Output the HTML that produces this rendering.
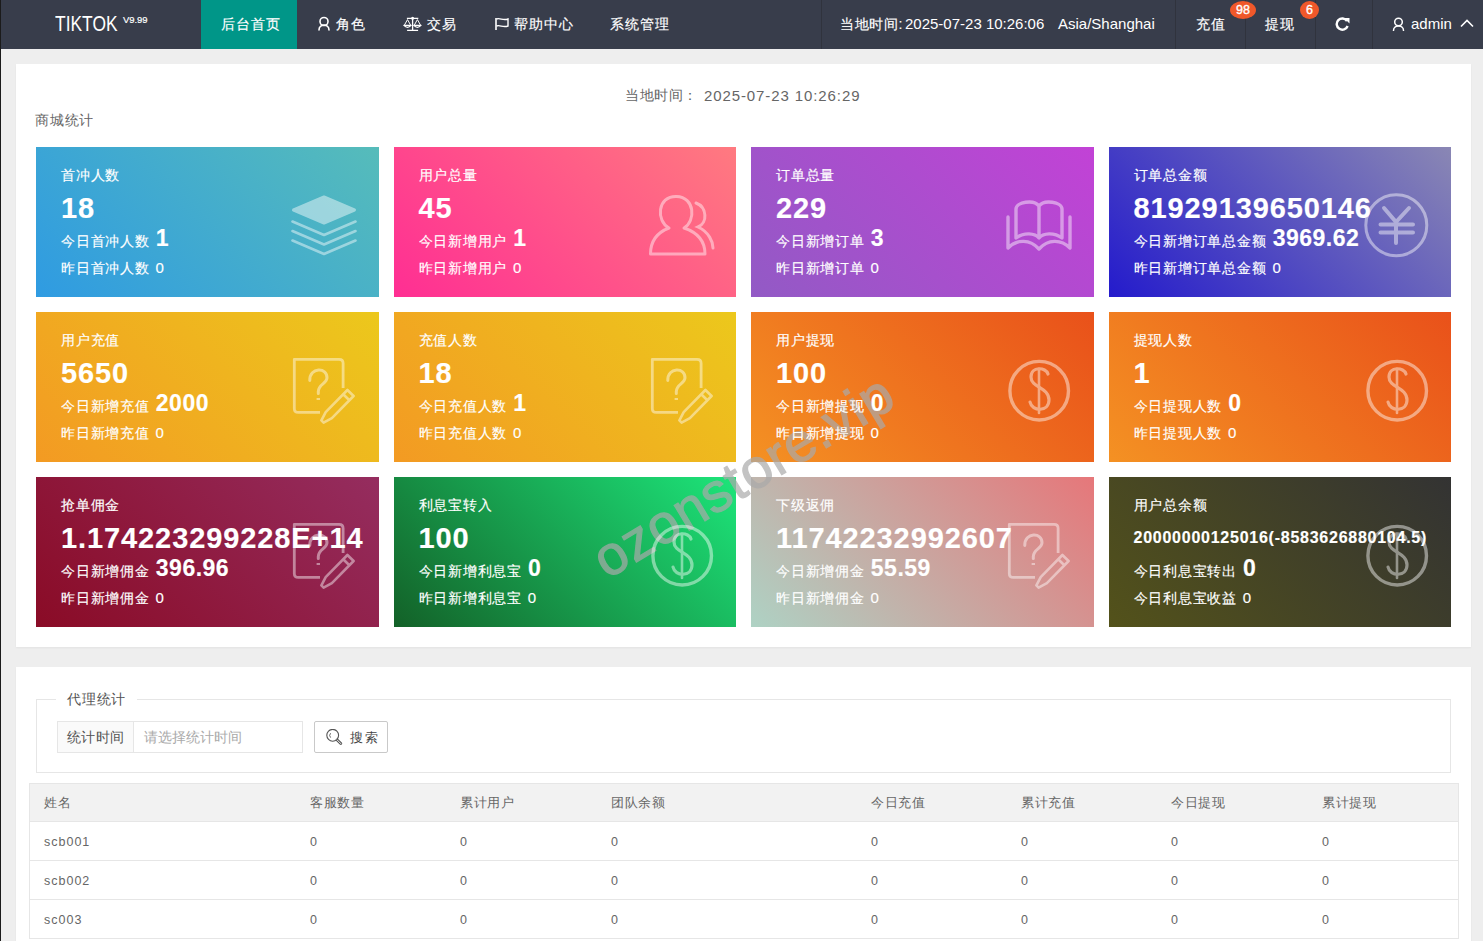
<!DOCTYPE html>
<html><head><meta charset="utf-8">
<style>
*{margin:0;padding:0;box-sizing:border-box}
html,body{width:1483px;height:941px;overflow:hidden;background:#eeeeee;font-family:"Liberation Sans",sans-serif;position:relative}
.abs{position:absolute}
#hdr{position:absolute;left:0;top:0;width:1483px;height:49px;background:#383d4b;color:#fff}
#hdr .t{position:absolute;top:0;height:49px;line-height:49px;font-size:14px;color:#fff;white-space:nowrap;-webkit-text-stroke:.15px #fff}
#hdr svg{position:absolute}
.sep{position:absolute;top:0;width:1px;height:49px;background:#30333d}
.badge{position:absolute;line-height:18px;border-radius:50%;background:#f0582a;color:#fff;font-size:12.5px;text-align:center;-webkit-text-stroke:.35px #fff}
#leftbar{position:absolute;left:0;top:0;width:1px;height:941px;background:#1b1b1b}
.card{position:absolute;left:16px;width:1455px;background:#fff;box-shadow:0 1px 2px rgba(0,0,0,.05)}
.sc{position:absolute;width:342.5px;height:150px;color:#fff;overflow:hidden;-webkit-text-stroke:.15px #fff}
.sc svg{position:absolute}
.sc .ti{position:absolute;left:25px;top:19px;font-size:14px;line-height:18px;white-space:nowrap;letter-spacing:.8px}
.sc .big{position:absolute;left:25px;top:45px;font-size:29px;font-weight:bold;line-height:32px;white-space:nowrap;letter-spacing:.9px}
.sc .l1{position:absolute;left:25px;top:80px;font-size:14px;line-height:22px;white-space:nowrap;letter-spacing:.8px}
.sc .l1 b{font-size:23px;margin-left:6px;letter-spacing:.5px}
.sc .l2{position:absolute;left:25px;top:110px;font-size:14px;line-height:22px;white-space:nowrap;letter-spacing:.8px}
.sc .l2 i{font-style:normal;font-size:15px;margin-left:1px}
.tbl{position:absolute;left:29px;top:783px;width:1430px;border:1px solid #e6e6e6;border-bottom:0}
.tr{position:relative;height:39px;border-bottom:1px solid #e6e6e6;font-size:12.5px;color:#666;letter-spacing:1px}
.tr.h span{letter-spacing:.5px;font-size:13px;top:0}
.tr.h{background:#f2f2f2;height:38px}
.tr span{position:absolute;top:1px;line-height:38px;white-space:nowrap;margin-left:1px}
</style></head><body>
<div id="hdr">
  <div class="t" style="left:55px;top:0px;font-size:21.5px;transform-origin:0 0;transform:scaleX(.81);-webkit-text-stroke:0">TIKTOK</div>
  <div class="t" style="left:123px;top:-5px;font-size:9.5px;letter-spacing:-.1px;-webkit-text-stroke:.2px #fff">V9.99</div>
  <div class="abs" style="left:201px;top:0;width:96px;height:49px;background:#009688"></div>
  <div class="t" style="left:221px;letter-spacing:1px">后台首页</div>
  <svg style="left:317px;top:16px" width="14" height="15"><circle cx="7" cy="5.5" r="4" fill="none" stroke="#fff" stroke-width="1.6"/><path d="M2 14 C2 7.5 12 7.5 12 14" fill="none" stroke="#fff" stroke-width="1.6" stroke-linecap="round"/></svg>
  <div class="t" style="left:336px;letter-spacing:1px">角色</div>
  <svg style="left:403px;top:16px" width="20" height="16"><path d="M3.9 2.3 L15.3 2.3 M9.6 2.3 L9.6 14.3 M4.1 14.4 L15.1 14.4" stroke="#fff" stroke-width="1.3" fill="none"/><circle cx="9.6" cy="2.3" r="1.5" fill="#fff"/><path d="M1.3 9.3 L4.5 3.6 L7.7 9.3 M11.2 9.3 L14.4 3.6 L17.6 9.3" stroke="#fff" stroke-width="1" fill="none" stroke-linejoin="round"/><path d="M0.9 9.4 Q4.5 13.3 8.1 9.4 Z M10.8 9.4 Q14.4 13.3 18 9.4 Z" stroke="#fff" stroke-width="1.3" fill="none" stroke-linejoin="round"/></svg>
  <div class="t" style="left:427px;letter-spacing:1px">交易</div>
  <svg style="left:495px;top:17px" width="15" height="14"><path d="M1 1 L1 13" stroke="#fff" stroke-width="1.6"/><path d="M1.5 2 C5 0.5 8 4 13 2 L13 9 C8 11 5 7.5 1.5 9" stroke="#fff" stroke-width="1.4" fill="none"/></svg>
  <div class="t" style="left:514px;letter-spacing:1px">帮助中心</div>
  <div class="t" style="left:610px;letter-spacing:1px">系统管理</div>
  <div class="sep" style="left:821px"></div>
  <div class="t" style="left:840px;letter-spacing:.6px">当地时间:</div>
  <div class="t" style="left:905px;top:-1px;font-size:15px;-webkit-text-stroke:0">2025-07-23 10:26:06</div>
  <div class="t" style="left:1058px;top:-1px;font-size:15px;-webkit-text-stroke:0">Asia/Shanghai</div>
  <div class="sep" style="left:1175px"></div>
  <div class="t" style="left:1195.5px;letter-spacing:1px">充值</div>
  <div class="sep" style="left:1245px"></div>
  <div class="badge" style="left:1230px;top:1px;width:26px;height:18px">98</div>
  <div class="t" style="left:1265px;letter-spacing:1px">提现</div>
  <div class="sep" style="left:1315px"></div>
  <div class="badge" style="left:1300px;top:1px;width:19px;height:18px">6</div>
  <svg style="left:1335px;top:17px" width="16" height="14"><path d="M12 4 A5.6 5.6 0 1 0 12.6 9" stroke="#fff" stroke-width="2.4" fill="none"/><path d="M9 1 L14.5 1 L14.5 6.5 Z" fill="#fff"/></svg>
  <div class="sep" style="left:1372px"></div>
  <svg style="left:1392px;top:17px" width="13" height="14"><circle cx="6.5" cy="5" r="3.8" fill="none" stroke="#fff" stroke-width="1.5"/><path d="M1.5 13.5 C1.5 7.5 11.5 7.5 11.5 13.5" fill="none" stroke="#fff" stroke-width="1.5" stroke-linecap="round"/></svg>
  <div class="t" style="left:1411px;top:-1px;font-size:15px;-webkit-text-stroke:0">admin</div>
  <svg style="left:1460px;top:19px" width="14" height="9"><path d="M1 7.5 L7 1.5 L13 7.5" stroke="#fff" stroke-width="1.6" fill="none"/></svg>
</div>
<div id="leftbar"></div>

<div class="card" style="top:64px;height:583px">
  <div class="abs" style="left:609px;top:23px;font-size:14px;color:#666;white-space:nowrap;letter-spacing:.6px">当地时间：</div>
  <div class="abs" style="left:688px;top:23px;font-size:15px;line-height:17px;color:#666;white-space:nowrap;letter-spacing:.9px">2025-07-23 10:26:29</div>
  <div class="abs" style="left:19px;top:48px;font-size:14px;color:#666;letter-spacing:.8px">商城统计</div>
</div>
<div class="sc" style="left:36px;top:147px;background:linear-gradient(45deg,#2f9be2,#56bcba)"></div>
<div class="sc" style="left:393.5px;top:147px;background:linear-gradient(45deg,#ff2e93,#ff7a80)"></div>
<div class="sc" style="left:751px;top:147px;background:linear-gradient(45deg,#925ac5,#c242d6)"></div>
<div class="sc" style="left:1108.5px;top:147px;background:linear-gradient(45deg,#241bcc,#8a87b4)"></div>
<div class="sc" style="left:36px;top:312px;background:linear-gradient(45deg,#f39a23,#ecc81c)"></div>
<div class="sc" style="left:393.5px;top:312px;background:linear-gradient(45deg,#f39a23,#ecc81c)"></div>
<div class="sc" style="left:751px;top:312px;background:linear-gradient(45deg,#f49123,#e9511a)"></div>
<div class="sc" style="left:1108.5px;top:312px;background:linear-gradient(45deg,#f49123,#e9511a)"></div>
<div class="sc" style="left:36px;top:477px;background:linear-gradient(45deg,#8a0b26,#952d5f)"></div>
<div class="sc" style="left:393.5px;top:477px;background:linear-gradient(45deg,#136128,#1de57a)"></div>
<div class="sc" style="left:751px;top:477px;background:linear-gradient(45deg,#aed2c4,#e6777a)"></div>
<div class="sc" style="left:1108.5px;top:477px;background:linear-gradient(45deg,#53521a,#333333)"></div>
<div class="abs" style="left:613px;top:529px;height:60px;line-height:60px;font-size:55px;color:#aaa;-webkit-text-stroke:1.2px #aaa;opacity:.7;transform-origin:0 100%;transform:rotate(-31deg);white-space:nowrap;letter-spacing:1px">ozonstore.vip</div>
<div class="sc" style="left:36px;top:147px">
 <svg width="343" height="150" style="left:0;top:0"><g opacity="0.45"><path d="M257.5 63 L288 50 L318.5 63 L288 76 Z" fill="#fff" stroke="#fff" stroke-width="3" stroke-linejoin="round"/>
  <path d="M256.5 74.5 L288 88 L319.5 74.5" fill="none" stroke="#fff" stroke-width="2.6" stroke-linecap="round" stroke-linejoin="round"/>
  <path d="M256.5 84 L288 97.5 L319.5 84" fill="none" stroke="#fff" stroke-width="2.6" stroke-linecap="round" stroke-linejoin="round"/>
  <path d="M256.5 93.5 L288 107 L319.5 93.5" fill="none" stroke="#fff" stroke-width="2.6" stroke-linecap="round" stroke-linejoin="round"/></g></svg>
 <div class="ti">首冲人数</div>
 <div class="big">18</div>
 <div class="l1">今日首冲人数<b>1</b></div>
 <div class="l2">昨日首冲人数 <i>0</i></div>
</div>
<div class="sc" style="left:393.5px;top:147px">
 <svg width="343" height="150" style="left:0;top:0"><g opacity="0.45"><path d="M275 81 C262 74 263 49 282.5 49.5 C301 50 302 74 290 81 C305 86 311 96 311 107 L256.5 107 C256.5 96 262 86 275 81 Z" fill="none" stroke="#fff" stroke-width="3" stroke-linejoin="round"/>
  <path d="M302 56 C313 60 314 76 304 80 C315 85 319 95 319 101" fill="none" stroke="#fff" stroke-width="3" stroke-linecap="round"/></g></svg>
 <div class="ti">用户总量</div>
 <div class="big">45</div>
 <div class="l1">今日新增用户<b>1</b></div>
 <div class="l2">昨日新增用户 <i>0</i></div>
</div>
<div class="sc" style="left:751px;top:147px">
 <svg width="343" height="150" style="left:0;top:0"><g opacity="0.45"><path d="M257 70 L257 101 C266 92 279 92 288 102 C297 92 310 92 319 101 L319 70" fill="none" stroke="#fff" stroke-width="3.4" stroke-linecap="round" stroke-linejoin="round"/>
  <path d="M265 91 L265 62 C265 55 283 52 288 59 C293 52 311 55 311 62 L311 91 C303 85 292 86 288 91 C284 86 273 85 265 91 Z M288 59 L288 90" fill="none" stroke="#fff" stroke-width="3.4" stroke-linecap="round" stroke-linejoin="round"/></g></svg>
 <div class="ti">订单总量</div>
 <div class="big">229</div>
 <div class="l1">今日新增订单<b>3</b></div>
 <div class="l2">昨日新增订单 <i>0</i></div>
</div>
<div class="sc" style="left:1108.5px;top:147px">
 <svg width="343" height="150" style="left:0;top:0"><g opacity="0.45"><circle cx="287.3" cy="78.2" r="30.5" fill="none" stroke="#fff" stroke-width="3"/>
  <path d="M275 61 L287 75 L300 61 M287 75 L287 96 M271.5 77.5 L304 77.5 M271.5 85.5 L304 85.5" fill="none" stroke="#fff" stroke-width="4" stroke-linecap="round"/></g></svg>
 <div class="ti">订单总金额</div>
 <div class="big">81929139650146</div>
 <div class="l1">今日新增订单总金额<b>3969.62</b></div>
 <div class="l2">昨日新增订单总金额 <i>0</i></div>
</div>
<div class="sc" style="left:36px;top:312px">
 <svg width="343" height="150" style="left:0;top:0"><g opacity="0.45"><path d="M284 100.4 L262.3 100.4 Q258.3 100.4 258.3 96.4 L258.3 47.3 L303.1 47.3 Q307.1 47.3 307.1 51.3 L307.1 76" fill="none" stroke="#fff" stroke-width="2.8" stroke-linejoin="round"/>
  <path d="M273.8 68.4 C273.5 55 291.5 55 291 66 C290.5 72 282.5 72 282.3 79.5 L282.3 81.5" fill="none" stroke="#fff" stroke-width="3" stroke-linecap="round"/>
  <path d="M282.3 86 L282.3 88" fill="none" stroke="#fff" stroke-width="3.4" stroke-linecap="butt"/>
  <path d="M287.6 110.6 L295.9 106.1 L317.6 84.0 L311.4 78.0 L289.7 100.1 L285.4 108.4 Z M313.4 88.3 L307.2 82.3" fill="none" stroke="#fff" stroke-width="2.6" stroke-linejoin="round"/></g></svg>
 <div class="ti">用户充值</div>
 <div class="big">5650</div>
 <div class="l1">今日新增充值<b>2000</b></div>
 <div class="l2">昨日新增充值 <i>0</i></div>
</div>
<div class="sc" style="left:393.5px;top:312px">
 <svg width="343" height="150" style="left:0;top:0"><g opacity="0.45"><path d="M284 100.4 L262.3 100.4 Q258.3 100.4 258.3 96.4 L258.3 47.3 L303.1 47.3 Q307.1 47.3 307.1 51.3 L307.1 76" fill="none" stroke="#fff" stroke-width="2.8" stroke-linejoin="round"/>
  <path d="M273.8 68.4 C273.5 55 291.5 55 291 66 C290.5 72 282.5 72 282.3 79.5 L282.3 81.5" fill="none" stroke="#fff" stroke-width="3" stroke-linecap="round"/>
  <path d="M282.3 86 L282.3 88" fill="none" stroke="#fff" stroke-width="3.4" stroke-linecap="butt"/>
  <path d="M287.6 110.6 L295.9 106.1 L317.6 84.0 L311.4 78.0 L289.7 100.1 L285.4 108.4 Z M313.4 88.3 L307.2 82.3" fill="none" stroke="#fff" stroke-width="2.6" stroke-linejoin="round"/></g></svg>
 <div class="ti">充值人数</div>
 <div class="big">18</div>
 <div class="l1">今日充值人数<b>1</b></div>
 <div class="l2">昨日充值人数 <i>0</i></div>
</div>
<div class="sc" style="left:751px;top:312px">
 <svg width="343" height="150" style="left:0;top:0"><g opacity="0.45"><circle cx="288.2" cy="78.7" r="29.3" fill="none" stroke="#fff" stroke-width="3.4"/>
  <path d="M297 62 C295 55 280 54 280 65 C280 76 298 75 298 88 C298 100 281 100 279 90" fill="none" stroke="#fff" stroke-width="3.2" stroke-linecap="round"/>
  <path d="M288 57 L288 101" fill="none" stroke="#fff" stroke-width="2.6" stroke-linecap="round"/></g></svg>
 <div class="ti">用户提现</div>
 <div class="big">100</div>
 <div class="l1">今日新增提现<b>0</b></div>
 <div class="l2">昨日新增提现 <i>0</i></div>
</div>
<div class="sc" style="left:1108.5px;top:312px">
 <svg width="343" height="150" style="left:0;top:0"><g opacity="0.45"><circle cx="288.2" cy="78.7" r="29.3" fill="none" stroke="#fff" stroke-width="3.4"/>
  <path d="M297 62 C295 55 280 54 280 65 C280 76 298 75 298 88 C298 100 281 100 279 90" fill="none" stroke="#fff" stroke-width="3.2" stroke-linecap="round"/>
  <path d="M288 57 L288 101" fill="none" stroke="#fff" stroke-width="2.6" stroke-linecap="round"/></g></svg>
 <div class="ti">提现人数</div>
 <div class="big">1</div>
 <div class="l1">今日提现人数<b>0</b></div>
 <div class="l2">昨日提现人数 <i>0</i></div>
</div>
<div class="sc" style="left:36px;top:477px">
 <svg width="343" height="150" style="left:0;top:0"><g opacity="0.45"><path d="M284 100.4 L262.3 100.4 Q258.3 100.4 258.3 96.4 L258.3 47.3 L303.1 47.3 Q307.1 47.3 307.1 51.3 L307.1 76" fill="none" stroke="#fff" stroke-width="2.8" stroke-linejoin="round"/>
  <path d="M273.8 68.4 C273.5 55 291.5 55 291 66 C290.5 72 282.5 72 282.3 79.5 L282.3 81.5" fill="none" stroke="#fff" stroke-width="3" stroke-linecap="round"/>
  <path d="M282.3 86 L282.3 88" fill="none" stroke="#fff" stroke-width="3.4" stroke-linecap="butt"/>
  <path d="M287.6 110.6 L295.9 106.1 L317.6 84.0 L311.4 78.0 L289.7 100.1 L285.4 108.4 Z M313.4 88.3 L307.2 82.3" fill="none" stroke="#fff" stroke-width="2.6" stroke-linejoin="round"/></g></svg>
 <div class="ti">抢单佣金</div>
 <div class="big">1.174223299228E+14</div>
 <div class="l1">今日新增佣金<b>396.96</b></div>
 <div class="l2">昨日新增佣金 <i>0</i></div>
</div>
<div class="sc" style="left:393.5px;top:477px">
 <svg width="343" height="150" style="left:0;top:0"><g opacity="0.45"><circle cx="288.2" cy="78.7" r="29.3" fill="none" stroke="#fff" stroke-width="3.4"/>
  <path d="M297 62 C295 55 280 54 280 65 C280 76 298 75 298 88 C298 100 281 100 279 90" fill="none" stroke="#fff" stroke-width="3.2" stroke-linecap="round"/>
  <path d="M288 57 L288 101" fill="none" stroke="#fff" stroke-width="2.6" stroke-linecap="round"/></g></svg>
 <div class="ti">利息宝转入</div>
 <div class="big">100</div>
 <div class="l1">今日新增利息宝<b>0</b></div>
 <div class="l2">昨日新增利息宝 <i>0</i></div>
</div>
<div class="sc" style="left:751px;top:477px">
 <svg width="343" height="150" style="left:0;top:0"><g opacity="0.45"><path d="M284 100.4 L262.3 100.4 Q258.3 100.4 258.3 96.4 L258.3 47.3 L303.1 47.3 Q307.1 47.3 307.1 51.3 L307.1 76" fill="none" stroke="#fff" stroke-width="2.8" stroke-linejoin="round"/>
  <path d="M273.8 68.4 C273.5 55 291.5 55 291 66 C290.5 72 282.5 72 282.3 79.5 L282.3 81.5" fill="none" stroke="#fff" stroke-width="3" stroke-linecap="round"/>
  <path d="M282.3 86 L282.3 88" fill="none" stroke="#fff" stroke-width="3.4" stroke-linecap="butt"/>
  <path d="M287.6 110.6 L295.9 106.1 L317.6 84.0 L311.4 78.0 L289.7 100.1 L285.4 108.4 Z M313.4 88.3 L307.2 82.3" fill="none" stroke="#fff" stroke-width="2.6" stroke-linejoin="round"/></g></svg>
 <div class="ti">下级返佣</div>
 <div class="big">11742232992607</div>
 <div class="l1">今日新增佣金<b>55.59</b></div>
 <div class="l2">昨日新增佣金 <i>0</i></div>
</div>
<div class="sc" style="left:1108.5px;top:477px">
 <svg width="343" height="150" style="left:0;top:0"><g opacity="0.45"><circle cx="288.2" cy="78.7" r="29.3" fill="none" stroke="#fff" stroke-width="3.4"/>
  <path d="M297 62 C295 55 280 54 280 65 C280 76 298 75 298 88 C298 100 281 100 279 90" fill="none" stroke="#fff" stroke-width="3.2" stroke-linecap="round"/>
  <path d="M288 57 L288 101" fill="none" stroke="#fff" stroke-width="2.6" stroke-linecap="round"/></g></svg>
 <div class="ti">用户总余额</div>
 <div class="big" style="font-size:16px;letter-spacing:.75px">20000000125016(-8583626880104.5)</div>
 <div class="l1">今日利息宝转出<b>0</b></div>
 <div class="l2">今日利息宝收益 <i>0</i></div>
</div>

<div class="card" style="top:667px;height:300px">
  <div class="abs" style="left:20px;top:32px;width:1415px;height:74px;border:1px solid #e6e6e6"></div>
  <div class="abs" style="left:40px;top:23px;padding:0 11px;background:#fff;font-size:14px;color:#555;line-height:18px;letter-spacing:.8px">代理统计</div>
  <div class="abs" style="left:41px;top:54px;width:77px;height:32px;border:1px solid #e6e6e6;background:#fafafa;font-size:14px;color:#555;line-height:30px;text-align:center;letter-spacing:.5px">统计时间</div>
  <div class="abs" style="left:117px;top:54px;width:170px;height:32px;border:1px solid #e6e6e6;font-size:14px;color:#aaa;line-height:30px;padding-left:10px">请选择统计时间</div>
  <div class="abs" style="left:298px;top:54px;width:74px;height:32px;border:1px solid #c9c9c9;border-radius:2px;font-size:13px;color:#444;line-height:32px;padding-left:34.5px;letter-spacing:2.2px">搜索</div>
  <svg class="abs" style="left:309px;top:62px" width="20" height="18"><circle cx="7.7" cy="6.3" r="5.9" fill="none" stroke="#555" stroke-width="1.1"/><path d="M12.2 11 L15.8 14.6" stroke="#555" stroke-width="2.8" stroke-linecap="round"/><path d="M12.2 11 L15.8 14.6" stroke="#fff" stroke-width="0.9" stroke-linecap="round"/><path d="M5.6 4.2 A3.3 3.3 0 0 0 5.6 8.6" fill="none" stroke="#555" stroke-width=".9"/></svg>
</div>

<div class="tbl">
  <div class="tr h"><span style="left:13px">姓名</span><span style="left:279px">客服数量</span><span style="left:429px">累计用户</span><span style="left:580px">团队余额</span><span style="left:840px">今日充值</span><span style="left:990px">累计充值</span><span style="left:1140px">今日提现</span><span style="left:1291px">累计提现</span></div>
  <div class="tr"><span style="left:13px">scb001</span><span style="left:279px">0</span><span style="left:429px">0</span><span style="left:580px">0</span><span style="left:840px">0</span><span style="left:990px">0</span><span style="left:1140px">0</span><span style="left:1291px">0</span></div>
  <div class="tr"><span style="left:13px">scb002</span><span style="left:279px">0</span><span style="left:429px">0</span><span style="left:580px">0</span><span style="left:840px">0</span><span style="left:990px">0</span><span style="left:1140px">0</span><span style="left:1291px">0</span></div>
  <div class="tr"><span style="left:13px">sc003</span><span style="left:279px">0</span><span style="left:429px">0</span><span style="left:580px">0</span><span style="left:840px">0</span><span style="left:990px">0</span><span style="left:1140px">0</span><span style="left:1291px">0</span></div>
</div>


</body></html>
